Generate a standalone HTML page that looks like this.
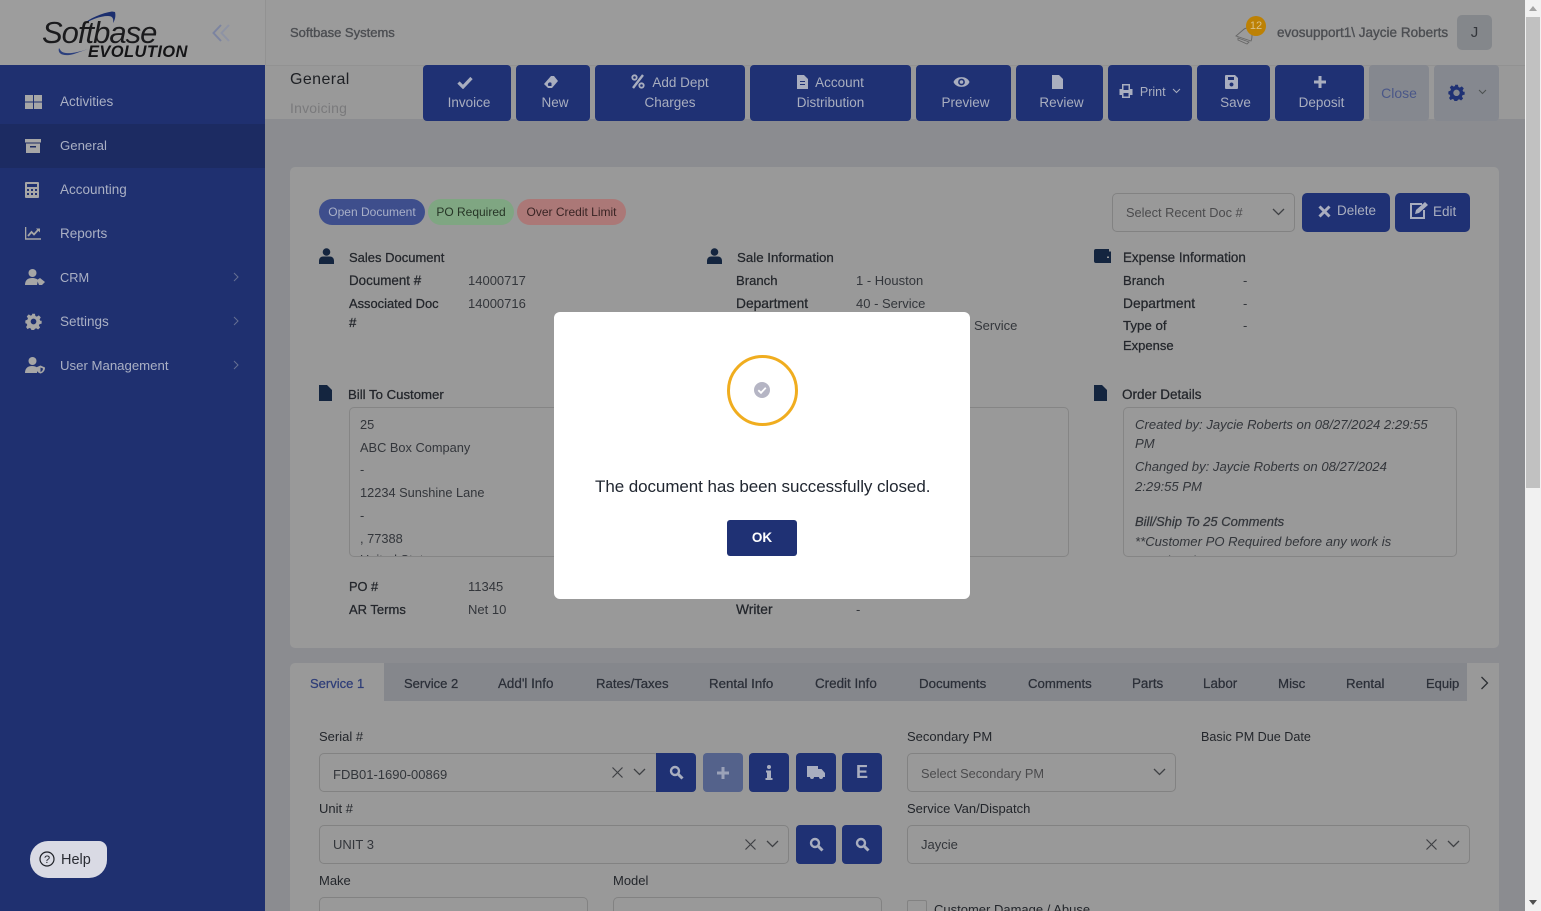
<!DOCTYPE html>
<html><head><meta charset="utf-8"><title>Softbase Evolution</title>
<style>
*{box-sizing:border-box}
html,body{margin:0;padding:0;width:1541px;height:911px;overflow:hidden;background:#8b8c90;font-family:"Liberation Sans",sans-serif;font-size:13px;color:#23262b}
#w{position:relative;width:1541px;height:911px;overflow:hidden;contain:paint}
.a,.t,.b,.f{position:absolute}
.t{white-space:nowrap;line-height:22px;height:20px}
.m{-webkit-text-stroke:.25px currentColor;font-size:13.3px}
.s{color:#aab0c4;left:60px;font-size:13.5px}
.b{background:#1f3174;border-radius:4px;color:#a9aebf;text-align:center;line-height:20px;top:65px;height:56px;padding-top:8px;font-size:13.5px}
.b svg{vertical-align:-2px}
.one{padding-left:4px}
.one svg{position:relative;left:-4px}
.f{border:1px solid #828282;border-radius:5px;background:#999}
.g{background:#1f3174;border-radius:4px;position:absolute;color:#a9aebf;display:flex;align-items:center;justify-content:center}
.tab{top:673px;color:#2b2f38;font-size:13.2px}
.lab{color:#23262b;font-size:13px}
.v{color:#33363b;font-size:13px}
svg{display:block}
.b svg{display:inline-block}
</style></head><body><div id="w">

<!-- header -->
<div class="a" style="left:0;top:0;width:265px;height:65px;background:#9d9d9d"></div>
<div class="a" style="left:265px;top:0;width:1260px;height:65px;background:#9b9b9b"></div>
<div class="a" style="left:265px;top:0;width:1px;height:65px;background:#929292"></div>
<div class="a" style="left:265px;top:65px;width:1260px;height:54px;background:#999"></div>
<div class="a" style="left:266px;top:65px;width:1259px;height:1px;background:#929292"></div>

<!-- logo -->
<svg class="a" style="left:40px;top:8px" width="150" height="55" viewBox="0 0 150 55">
<path d="M42 17C50 10 62 5 72 3.500L75 4C76 8 75 12 73 15C74 10 72 8 68 8C60 8 50 12 42 17Z" fill="#1c2f6e"/>
<path d="M19 40C17 46 24 49 34 46L48 41C36 45 25 47 21 43Z" fill="#2b3f7d"/>
<text x="2" y="35" font-family="Liberation Sans" font-style="italic" font-size="31" letter-spacing="-1" fill="#1b1b1d">Softbase</text>
<text x="48" y="49" font-family="Liberation Sans" font-style="italic" font-weight="bold" font-size="16.5" letter-spacing=".4" fill="#141416">EVOLUTION</text>
</svg>
<svg class="a" style="left:212px;top:24px" width="20" height="18" viewBox="0 0 20 18" fill="none" stroke-width="2"><path d="M9 1 1.500 9 9 17" stroke="#7c84a0"/><path d="M17 1 9.500 9 17 17" stroke="#8e93a4"/></svg>
<div class="t m" style="left:290px;top:22px;color:#4c4e52;font-size:13px;-webkit-text-stroke-width:.35px">Softbase Systems</div>

<!-- bell and user -->
<svg class="a" style="left:1234px;top:22px" width="24" height="24" viewBox="0 0 24 24" fill="none" stroke="#666" stroke-width=".9"><path d="M2 14 9 8C12 5 15 6 16 8L18 13C18 15 18 17 17 19L2 14Z"/><path d="M4 16 15 20 13 22 4 18Z"/></svg>
<div class="a" style="left:1246px;top:16px;width:20px;height:20px;border-radius:50%;background:#bd8104;color:#d9c08a;font-size:11px;line-height:20px;text-align:center">12</div>
<div class="t m" style="left:1277px;top:22px;color:#4c4e52;font-size:13.500px;-webkit-text-stroke-width:.35px">evosupport1\ Jaycie Roberts</div>
<div class="a" style="left:1457px;top:15px;width:35px;height:35px;border-radius:5px;background:#84878b;color:#33363b;font-size:15px;line-height:35px;text-align:center">J</div>

<div class="t" style="left:290px;top:69px;font-size:16px;color:#1e2024;letter-spacing:.4px">General</div>
<div class="t" style="left:290px;top:97px;font-size:14px;color:#7a7a7c;letter-spacing:.2px">Invoicing</div>

<!-- toolbar -->
<div class="b one" style="left:423px;width:88px"><svg width="16" height="14" viewBox="0 0 16 14"><path d="M1.500 7.500 6 12 14.500 3" fill="none" stroke="#a9aebf" stroke-width="3.200"/></svg><br>Invoice</div>
<div class="b one" style="left:516px;width:74px"><svg width="16" height="14" viewBox="0 0 16 14"><path d="M1 9 8 1h3l4 5-6 7H5zM8.500 8a2 2 0 0 0-3 3h3z" fill="#a9aebf" fill-rule="evenodd"/></svg><br>New</div>
<div class="b" style="left:595px;width:150px"><svg width="14" height="15" viewBox="0 0 14 15" style="margin-right:7px"><path d="M12 1 2 14" stroke="#a9aebf" stroke-width="2.400"/><circle cx="3.500" cy="3.500" r="2.200" fill="none" stroke="#a9aebf" stroke-width="1.800"/><circle cx="10.500" cy="11.500" r="2.200" fill="none" stroke="#a9aebf" stroke-width="1.800"/></svg>Add Dept<br>Charges</div>
<div class="b" style="left:750px;width:161px"><svg width="11" height="14" viewBox="0 0 11 14" style="margin-right:7px"><path d="M0 0h7l4 4v10H0zM3 6h5v1H3zM3 9h5v1H3z" fill="#a9aebf" fill-rule="evenodd"/></svg>Account<br>Distribution</div>
<div class="b one" style="left:916px;width:95px"><svg width="17" height="14" viewBox="0 0 17 14"><path d="M.5 7C3 .5 14 .5 16.500 7 14 13.500 3 13.500 .5 7Z" fill="#a9aebf"/><circle cx="8.500" cy="7" r="3.400" fill="#1f3174"/><circle cx="8.500" cy="7" r="1.800" fill="#a9aebf"/></svg><br>Preview</div>
<div class="b one" style="left:1016px;width:87px"><svg width="11" height="14" viewBox="0 0 11 14"><path d="M0 0h7l4 4v10H0z" fill="#a9aebf"/></svg><br>Review</div>
<div class="b" style="left:1108px;width:84px;padding-top:17px;font-size:12.500px"><svg width="14" height="14" viewBox="0 0 14 14" style="margin-right:7px"><path d="M3 0h8v5h2.500v6H11v3H3v-3H.5V5H3zM4.500 1.500V6h5V1.500zM4.500 9v3.500h5V9z" fill="#a9aebf" fill-rule="evenodd"/></svg>Print <svg width="9" height="6" viewBox="0 0 9 6" style="margin-left:3px;vertical-align:2px"><path d="M1 1 4.500 4.500 8 1" fill="none" stroke="#a9aebf"/></svg></div>
<div class="b one" style="left:1197px;width:73px"><svg width="13" height="14" viewBox="0 0 13 14"><path d="M1 0h9l3 3v10a1 1 0 0 1-1 1H1a1 1 0 0 1-1-1V1a1 1 0 0 1 1-1zM3 2v3h6V2zM6.500 7.500a2 2 0 1 0 .01 0z" fill="#a9aebf" fill-rule="evenodd"/></svg><br>Save</div>
<div class="b one" style="left:1275px;width:89px"><svg width="14" height="14" viewBox="0 0 14 14" style="left:-2px"><path d="M7 1v12M1 7h12" stroke="#a9aebf" stroke-width="3"/></svg><br>Deposit</div>
<div class="a" style="left:1369px;top:65px;width:60px;height:56px;background:#85888f;border-radius:4px;color:#4a5788;text-align:center;line-height:56px;font-size:14px">Close</div>
<div class="a" style="left:1434px;top:65px;width:65px;height:56px;background:#85888f;border-radius:4px"></div>
<svg class="a" style="left:1448px;top:84px" width="17" height="17" viewBox="0 0 24 24"><path d="M10 1h4l.7 3.200 2 .9 2.800-1.700 2.800 2.800-1.700 2.800.9 2L23.500 11v4l-3 .7-.9 2 1.700 2.800-2.800 2.800-2.800-1.700-2 .9-.7 1.500h-4l-.7-2-2-.9-2.800 1.700L1.500 19.800l1.700-2.800-.9-2L.5 14.500v-4l2.800-.9.900-2L2.500 4.800 5.300 2 8 3.700l2-.9zM12 8a4.500 4.500 0 1 0 .01 0z" fill="#1f3174" fill-rule="evenodd"/></svg>
<svg class="a" style="left:1478px;top:89px" width="9" height="6" viewBox="0 0 9 6"><path d="M1 1 4.500 4.500 8 1" fill="none" stroke="#4b5050"/></svg>

<!-- sidebar -->
<div class="a" style="left:0;top:65px;width:265px;height:846px;background:#1f3070"></div>
<div class="a" style="left:0;top:124px;width:265px;height:44px;background:#1c2b62"></div>
<svg class="a" style="left:25px;top:95px" width="17" height="14" viewBox="0 0 17 14"><path d="M0 0h8v6.500H0zM9 0h8v6.500H9zM0 7.500h8V14H0zM9 7.500h8V14H9z" fill="#a6a6a6"/></svg>
<div class="t s" style="top:91px">Activities</div>
<svg class="a" style="left:25px;top:139px" width="16" height="14" viewBox="0 0 16 14"><path d="M0 0h16v3.500H0zM1 4.500h14V14H1zM5 7v1.500h6V7z" fill="#a6a6a6" fill-rule="evenodd"/></svg>
<div class="t s" style="top:135px;font-size:13.200px">General</div>
<svg class="a" style="left:25px;top:182px" width="14" height="16" viewBox="0 0 14 16"><path d="M1 0h12a1 1 0 0 1 1 1v14a1 1 0 0 1-1 1H1a1 1 0 0 1-1-1V1a1 1 0 0 1 1-1zM2 2v3h10V2zM2 7v2h2V7zM6 7v2h2V7zM10 7v2h2V7zM2 11v2h2v-2zM6 11v2h2v-2zM10 11v2h2v-2z" fill="#a6a6a6" fill-rule="evenodd"/></svg>
<div class="t s" style="top:179px">Accounting</div>
<svg class="a" style="left:25px;top:227px" width="16" height="13" viewBox="0 0 16 13"><path d="M.5 0v12H16" fill="none" stroke="#a6a6a6" stroke-width="1.600"/><path d="M3 9 6.500 5 9 7.500 13 3" fill="none" stroke="#a6a6a6" stroke-width="1.800"/><path d="M11 1.500h4v4z" fill="#a6a6a6"/></svg>
<div class="t s" style="top:223px">Reports</div>
<svg class="a" style="left:25px;top:269px" width="20" height="17" viewBox="0 0 20 17"><circle cx="7.500" cy="4" r="4" fill="#a6a6a6"/><path d="M0 16c0-5 3-7 7-7 3 0 5 1 6 2l-1 5z" fill="#a6a6a6"/><path d="M12 11l3-2 5 4-3 3h-3z" fill="#a6a6a6"/></svg>
<div class="t s" style="top:267px;font-size:12.800px">CRM</div>
<svg class="a" style="left:25px;top:313px" width="17" height="17" viewBox="0 0 24 24"><path d="M10 1h4l.7 3.200 2 .9 2.800-1.700 2.800 2.800-1.700 2.800.9 2L23.500 11v4l-3 .7-.9 2 1.700 2.800-2.800 2.800-2.800-1.700-2 .9-.7 1.500h-4l-.7-2-2-.9-2.800 1.700L1.500 19.800l1.700-2.800-.9-2L.5 14.500v-4l2.800-.9.900-2L2.500 4.800 5.300 2 8 3.700l2-.9zM12 8a4 4 0 1 0 .01 0z" fill="#a6a6a6" fill-rule="evenodd"/></svg>
<div class="t s" style="top:311px">Settings</div>
<svg class="a" style="left:25px;top:357px" width="20" height="17" viewBox="0 0 20 17"><circle cx="7.500" cy="4" r="4" fill="#a6a6a6"/><path d="M0 16c0-5 3-7 7-7 2 0 4 .5 5 1.500V16z" fill="#a6a6a6"/><path d="M15.500 8.500l4.500 2c0 3-1.500 5-4.500 6-3-1-4.500-3-4.500-6z" fill="#a6a6a6"/><path d="M15.500 10.500l2.500 1c0 1.500-1 3-2.500 3.500z" fill="#1f3070"/></svg>
<div class="t s" style="top:355px;font-size:13.200px">User Management</div>
<svg class="a" style="left:233px;top:272px" width="6" height="10" viewBox="0 0 6 10"><path d="M1 1l4 4-4 4" fill="none" stroke="#666f93"/></svg>
<svg class="a" style="left:233px;top:316px" width="6" height="10" viewBox="0 0 6 10"><path d="M1 1l4 4-4 4" fill="none" stroke="#666f93"/></svg>
<svg class="a" style="left:233px;top:360px" width="6" height="10" viewBox="0 0 6 10"><path d="M1 1l4 4-4 4" fill="none" stroke="#666f93"/></svg>

<div class="a" style="left:30px;top:841px;width:77px;height:37px;background:#d9dae4;border-radius:18px 8px 18px 18px"></div>
<svg class="a" style="left:39px;top:851px" width="16" height="16" viewBox="0 0 16 16"><circle cx="8" cy="8" r="7" fill="none" stroke="#1e2026" stroke-width="1.200"/><text x="8" y="12" text-anchor="middle" font-size="11" fill="#1e2026" font-family="Liberation Sans">?</text></svg>
<div class="t" style="left:61px;top:849px;font-size:14.500px;color:#2a2c34">Help</div>

<!-- main card -->
<div class="a" style="left:290px;top:167px;width:1209px;height:481px;background:#999;border-radius:5px"></div>

<div class="a" style="left:319px;top:199px;width:106px;height:26px;border-radius:13px;background:#3e4e8c;color:#a9b0c8;font-size:12px;line-height:26px;text-align:center">Open Document</div>
<div class="a" style="left:428px;top:199px;width:86px;height:26px;border-radius:13px;background:#7fa682;color:#263526;font-size:12px;line-height:26px;text-align:center">PO Required</div>
<div class="a" style="left:517px;top:199px;width:109px;height:26px;border-radius:13px;background:#ab7877;color:#392424;font-size:12px;line-height:26px;text-align:center">Over Credit Limit</div>

<div class="f" style="left:1112px;top:193px;width:183px;height:39px"></div>
<div class="t" style="left:1126px;top:202px;color:#4b4b4d;font-size:12.800px">Select Recent Doc #</div>
<svg class="a" style="left:1272px;top:208px" width="13" height="8" viewBox="0 0 13 8"><path d="M1 1l5.500 5.500L12 1" fill="none" stroke="#3f4144" stroke-width="1.300"/></svg>
<div class="g" style="left:1302px;top:193px;width:88px;height:39px;border-radius:5px"></div>
<svg class="a" style="left:1318px;top:205px" width="13" height="13" viewBox="0 0 13 13"><path d="M1.500 1.500l10 10M11.500 1.500l-10 10" stroke="#a9aebf" stroke-width="3"/></svg>
<div class="t" style="left:1337px;top:200px;color:#a9aebf;font-size:13.500px">Delete</div>
<div class="g" style="left:1395px;top:193px;width:75px;height:39px;border-radius:5px"></div>
<svg class="a" style="left:1409px;top:201px" width="20" height="18" viewBox="0 0 20 18"><path d="M13 3H2v14h13V9" fill="none" stroke="#a9aebf" stroke-width="2"/><path d="M7 9l9-8 3 3-9 8-4 1z" fill="#a9aebf"/></svg>
<div class="t" style="left:1433px;top:201px;color:#a9aebf;font-size:13.500px">Edit</div>

<!-- section icons -->
<svg class="a" style="left:319px;top:248px" width="15" height="16" viewBox="0 0 15 16"><circle cx="7.500" cy="4" r="3.800" fill="#14253f"/><path d="M0 16v-3c0-3 2-4.500 4-4.500h7c2 0 4 1.500 4 4.500v3z" fill="#14253f"/></svg>
<svg class="a" style="left:707px;top:248px" width="15" height="16" viewBox="0 0 15 16"><circle cx="7.500" cy="4" r="3.800" fill="#14253f"/><path d="M0 16v-3c0-3 2-4.500 4-4.500h7c2 0 4 1.500 4 4.500v3z" fill="#14253f"/></svg>
<svg class="a" style="left:1094px;top:249px" width="17" height="14" viewBox="0 0 17 14"><path d="M2 0h13v2.500H17V14H2a2 2 0 0 1-2-2V2a2 2 0 0 1 2-2zM13 7.500v1.500h2V7.500z" fill="#14253f" fill-rule="evenodd"/></svg>
<svg class="a" style="left:319px;top:385px" width="13" height="16" viewBox="0 0 13 16"><path d="M0 0h8l5 5v11H0z" fill="#14253f"/></svg>
<svg class="a" style="left:1094px;top:385px" width="13" height="16" viewBox="0 0 13 16"><path d="M0 0h8l5 5v11H0z" fill="#14253f"/></svg>

<div class="t m" style="left:349px;top:247px;font-size:13px">Sales Document</div>
<div class="t m" style="left:349px;top:270px;font-size:13.400px">Document #</div>
<div class="t v" style="left:468px;top:270px">14000717</div>
<div class="t m" style="left:349px;top:293px;font-size:12.900px">Associated Doc</div>
<div class="t m" style="left:349px;top:312px">#</div>
<div class="t v" style="left:468px;top:293px">14000716</div>

<div class="t m" style="left:737px;top:247px">Sale Information</div>
<div class="t m" style="left:736px;top:270px;font-size:13.100px">Branch</div>
<div class="t v" style="left:856px;top:270px">1 - Houston</div>
<div class="t m" style="left:736px;top:293px;font-size:13.800px">Department</div>
<div class="t v" style="left:856px;top:293px">40 - Service</div>
<div class="t v" style="left:974px;top:315px">Service</div>

<div class="t m" style="left:1123px;top:247px;font-size:13.400px">Expense Information</div>
<div class="t m" style="left:1123px;top:270px;font-size:13.100px">Branch</div>
<div class="t v" style="left:1243px;top:270px">-</div>
<div class="t m" style="left:1123px;top:293px;font-size:13.800px">Department</div>
<div class="t v" style="left:1243px;top:293px">-</div>
<div class="t m" style="left:1123px;top:315px">Type of</div>
<div class="t v" style="left:1243px;top:315px">-</div>
<div class="t m" style="left:1123px;top:335px;font-size:13px">Expense</div>

<div class="t m" style="left:348px;top:384px;font-size:13.200px">Bill To Customer</div>
<div class="a" style="left:349px;top:407px;width:260px;height:150px;border:1px solid #858585;border-radius:5px;overflow:hidden;color:#33363b;font-size:12.800px">
 <div class="t" style="left:10px;top:6px">25</div>
 <div class="t" style="left:10px;top:29px">ABC Box Company</div>
 <div class="t" style="left:10px;top:51px">-</div>
 <div class="t" style="left:10px;top:74px">12234 Sunshine Lane</div>
 <div class="t" style="left:10px;top:97px">-</div>
 <div class="t" style="left:10px;top:120px">, 77388</div>
 <div class="t" style="left:10px;top:141px">United States</div>
</div>
<div class="a" style="left:960px;top:407px;width:109px;height:150px;border:1px solid #858585;border-radius:5px"></div>

<div class="t m" style="left:1122px;top:384px;font-size:13.500px">Order Details</div>
<div class="a" style="left:1123px;top:407px;width:334px;height:150px;border:1px solid #858585;border-radius:5px;overflow:hidden;color:#33363b;font-size:13.100px;font-style:italic">
 <div class="t" style="left:11px;top:6px">Created by: Jaycie Roberts on 08/27/2024 2:29:55</div>
 <div class="t" style="left:11px;top:25px">PM</div>
 <div class="t" style="left:11px;top:48px">Changed by: Jaycie Roberts on 08/27/2024</div>
 <div class="t" style="left:11px;top:68px">2:29:55 PM</div>
 <div class="t m" style="left:11px;top:103px;font-size:13px">Bill/Ship To 25 Comments</div>
 <div class="t" style="left:11px;top:123px">**Customer PO Required before any work is</div>
 <div class="t" style="left:11px;top:142px">completed</div>
</div>

<div class="t m" style="left:349px;top:576px;font-size:12.800px">PO #</div>
<div class="t v" style="left:468px;top:576px">11345</div>
<div class="t m" style="left:349px;top:599px;font-size:13px">AR Terms</div>
<div class="t v" style="left:468px;top:599px">Net 10</div>
<div class="t m" style="left:736px;top:599px;font-size:13.800px">Writer</div>
<div class="t v" style="left:856px;top:599px">-</div>

<!-- tabs and lower card -->
<div class="a" style="left:290px;top:663px;width:1209px;height:248px;background:#999;border-radius:5px 5px 0 0"></div>
<div class="a" style="left:384px;top:663px;width:1083px;height:38px;background:#85878c"></div>
<div class="a" style="left:1467px;top:663px;width:32px;height:38px;background:#999"></div>
<svg class="a" style="left:1480px;top:676px" width="9" height="14" viewBox="0 0 9 14"><path d="M1.500 1 7.500 7l-6 6" fill="none" stroke="#2c2f33" stroke-width="1.300"/></svg>
<div class="t m tab" style="left:310px;color:#2f3e78;font-size:13px">Service 1</div>
<div class="t m tab" style="left:404px;font-size:13px">Service 2</div>
<div class="t m tab" style="left:498px;font-size:13.400px">Add'l Info</div>
<div class="t m tab" style="left:596px;font-size:13.200px">Rates/Taxes</div>
<div class="t m tab" style="left:709px;font-size:13.300px">Rental Info</div>
<div class="t m tab" style="left:815px;font-size:13.400px">Credit Info</div>
<div class="t m tab" style="left:919px;font-size:13.300px">Documents</div>
<div class="t m tab" style="left:1028px;font-size:13.200px">Comments</div>
<div class="t m tab" style="left:1132px;font-size:13.400px">Parts</div>
<div class="t m tab" style="left:1203px;font-size:13.400px">Labor</div>
<div class="t m tab" style="left:1278px;font-size:13.300px">Misc</div>
<div class="t m tab" style="left:1346px;font-size:13.300px">Rental</div>
<div class="t m tab" style="left:1426px;font-size:13px">Equip</div>

<div class="t lab" style="left:319px;top:726px">Serial #</div>
<div class="f" style="left:319px;top:753px;width:340px;height:39px"></div>
<div class="t v" style="left:333px;top:764px">FDB01-1690-00869</div>
<svg class="a" style="left:611px;top:766px" width="13" height="13" viewBox="0 0 13 13"><path d="M1.500 1.500l10 10M11.500 1.500l-10 10" stroke="#3f4144" stroke-width="1.200"/></svg>
<svg class="a" style="left:633px;top:768px" width="13" height="8" viewBox="0 0 13 8"><path d="M1 1l5.500 5.500L12 1" fill="none" stroke="#3f4144" stroke-width="1.300"/></svg>
<div class="g" style="left:656px;top:753px;width:40px;height:39px;border-radius:0 4px 4px 0"><svg width="15" height="15" viewBox="0 0 15 15"><circle cx="6" cy="6" r="4" fill="none" stroke="#a9aebf" stroke-width="2.400"/><path d="M9 9l4.500 4.500" stroke="#a9aebf" stroke-width="3"/></svg></div>
<div class="g" style="left:703px;top:753px;width:40px;height:39px;background:#54628b"><svg width="14" height="14" viewBox="0 0 14 14"><path d="M7 1v12M1 7h12" stroke="#9ba2b8" stroke-width="3"/></svg></div>
<div class="g" style="left:749px;top:753px;width:40px;height:39px"><svg width="8" height="15" viewBox="0 0 8 15"><circle cx="4" cy="2" r="2" fill="#a9aebf"/><path d="M1 5.500h5V13h1.500v2H.5v-2H2V7.500H1z" fill="#a9aebf"/></svg></div>
<div class="g" style="left:796px;top:753px;width:40px;height:39px"><svg width="18" height="14" viewBox="0 0 18 14"><path d="M0 0h11v3h3.500l3.500 4v4h-2a2 2 0 0 1-4 0H7a2 2 0 0 1-4 0H0z" fill="#a9aebf"/></svg></div>
<div class="g" style="left:842px;top:753px;width:40px;height:39px;font-weight:bold;font-size:18px">E</div>

<div class="t lab" style="left:319px;top:798px">Unit #</div>
<div class="f" style="left:319px;top:825px;width:470px;height:39px"></div>
<div class="t v" style="left:333px;top:834px">UNIT 3</div>
<svg class="a" style="left:744px;top:838px" width="13" height="13" viewBox="0 0 13 13"><path d="M1.500 1.500l10 10M11.500 1.500l-10 10" stroke="#3f4144" stroke-width="1.200"/></svg>
<svg class="a" style="left:766px;top:840px" width="13" height="8" viewBox="0 0 13 8"><path d="M1 1l5.500 5.500L12 1" fill="none" stroke="#3f4144" stroke-width="1.300"/></svg>
<div class="g" style="left:796px;top:825px;width:40px;height:39px"><svg width="15" height="15" viewBox="0 0 15 15"><circle cx="6" cy="6" r="4" fill="none" stroke="#a9aebf" stroke-width="2.400"/><path d="M9 9l4.500 4.500" stroke="#a9aebf" stroke-width="3"/></svg></div>
<div class="g" style="left:842px;top:825px;width:40px;height:39px"><svg width="15" height="15" viewBox="0 0 15 15"><circle cx="6" cy="6" r="4" fill="none" stroke="#a9aebf" stroke-width="2.400"/><path d="M9 9l4.500 4.500" stroke="#a9aebf" stroke-width="3"/></svg></div>

<div class="t lab" style="left:319px;top:870px">Make</div>
<div class="f" style="left:319px;top:897px;width:269px;height:39px"></div>
<div class="t lab" style="left:613px;top:870px">Model</div>
<div class="f" style="left:613px;top:897px;width:269px;height:39px"></div>

<div class="t lab" style="left:907px;top:726px">Secondary PM</div>
<div class="f" style="left:907px;top:753px;width:269px;height:39px"></div>
<div class="t" style="left:921px;top:763px;color:#4b4b4d;font-size:12.800px">Select Secondary PM</div>
<svg class="a" style="left:1153px;top:768px" width="13" height="8" viewBox="0 0 13 8"><path d="M1 1l5.500 5.500L12 1" fill="none" stroke="#3f4144" stroke-width="1.300"/></svg>
<div class="t lab" style="left:1201px;top:726px;font-size:12.600px">Basic PM Due Date</div>
<div class="t lab" style="left:907px;top:798px">Service Van/Dispatch</div>
<div class="f" style="left:907px;top:825px;width:563px;height:39px"></div>
<div class="t v" style="left:921px;top:834px">Jaycie</div>
<svg class="a" style="left:1425px;top:838px" width="13" height="13" viewBox="0 0 13 13"><path d="M1.500 1.500l10 10M11.500 1.500l-10 10" stroke="#3f4144" stroke-width="1.200"/></svg>
<svg class="a" style="left:1447px;top:840px" width="13" height="8" viewBox="0 0 13 8"><path d="M1 1l5.500 5.500L12 1" fill="none" stroke="#3f4144" stroke-width="1.300"/></svg>
<div class="a" style="left:907px;top:900px;width:20px;height:20px;border:1px solid #828282;border-radius:2px"></div>
<div class="t lab" style="left:934px;top:899px">Customer Damage / Abuse</div>

<!-- modal -->
<div class="a" style="left:554px;top:312px;width:416px;height:287px;background:#fff;border-radius:6px"></div>
<div class="a" style="left:727px;top:355px;width:71px;height:71px;border:3px solid #f0ad1f;border-radius:50%"></div>
<svg class="a" style="left:754px;top:382px" width="16" height="16" viewBox="0 0 16 16"><circle cx="8" cy="8" r="8" fill="#b5b5c4"/><path d="M4.300 8.200 7 10.800 11.800 5.800" fill="none" stroke="#fff" stroke-width="1.800"/></svg>
<div class="t" style="left:595px;top:476px;font-size:17px;color:#212731;letter-spacing:-.07px">The document has been successfully closed.</div>
<div class="a" style="left:727px;top:520px;width:70px;height:36px;background:#1f3174;border-radius:3px;color:#fff;font-size:13.500px;font-weight:bold;line-height:35px;text-align:center">OK</div>

<!-- scrollbar -->
<div class="a" style="left:1525px;top:0;width:16px;height:911px;background:#f1f1f1"></div>
<div class="a" style="left:1526px;top:17px;width:14px;height:471px;background:#c1c1c1"></div>
<svg class="a" style="left:1529px;top:6px" width="8" height="5" viewBox="0 0 8 5"><path d="M4 0l4 5H0z" fill="#a3a3a3"/></svg>
<svg class="a" style="left:1529px;top:900px" width="8" height="5" viewBox="0 0 8 5"><path d="M0 0h8L4 5z" fill="#505050"/></svg>
</div></body></html>
